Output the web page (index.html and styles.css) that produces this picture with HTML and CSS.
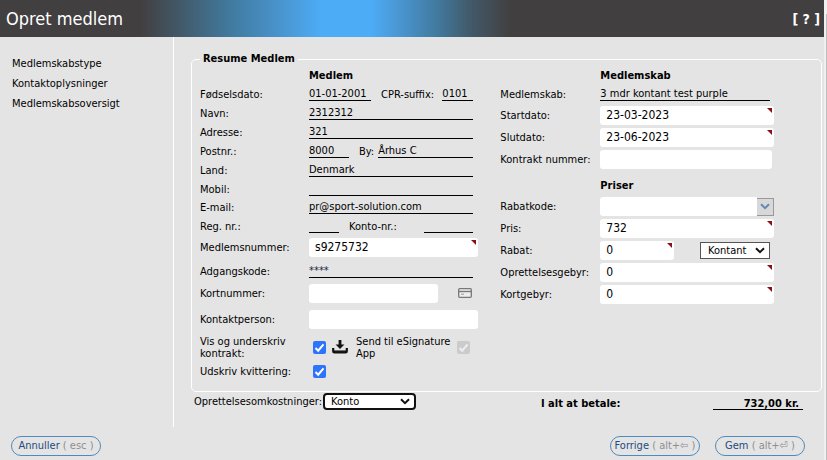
FILE: index.html
```html
<!DOCTYPE html>
<html lang="da">
<head>
<meta charset="utf-8">
<meta name="viewport" content="width=device-width, initial-scale=1">
<title>Opret medlem</title>
<link rel="stylesheet" href="styles.css">
</head>
<body>
<div class="window">
  <div class="page">
    <header class="titlebar">
      <h1 class="title">Opret medlem</h1>
      <a class="help" href="#help">[ ? ]</a>
    </header>
    <div class="content">
      <nav class="steps">
        <a href="#type">Medlemskabstype</a>
        <a href="#kontakt">Kontaktoplysninger</a>
        <a href="#oversigt">Medlemskabsoversigt</a>
      </nav>
      <main class="main">
        <fieldset class="resume">
          <legend>Resume Medlem</legend>
          <div class="columns">
            <section class="member">
              <h2 class="heading">Medlem</h2>
              <div class="row"><span class="label">Fødselsdato:</span><div class="values"><span class="value w-date">01-01-2001</span><span class="inner">CPR-suffix:</span><span class="value w-suffix">0101</span></div></div>
              <div class="row"><span class="label">Navn:</span><div class="values"><span class="value">2312312</span></div></div>
              <div class="row"><span class="label">Adresse:</span><div class="values"><span class="value">321</span></div></div>
              <div class="row"><span class="label">Postnr.:</span><div class="values"><span class="value w-zip">8000</span><span class="inner">By:</span><span class="value w-city">Århus C</span></div></div>
              <div class="row"><span class="label">Land:</span><div class="values"><span class="value">Denmark</span></div></div>
              <div class="row"><span class="label">Mobil:</span><div class="values"><span class="value"></span></div></div>
              <div class="row close"><span class="label">E-mail:</span><div class="values"><span class="value">pr@sport-solution.com</span></div></div>
              <div class="row close"><span class="label">Reg. nr.:</span><div class="values"><span class="value w-reg"></span><span class="inner">Konto-nr.:</span><span class="value w-account"></span></div></div>
              <div class="row tall close"><label class="label" for="number">Medlemsnummer:</label><span class="field required"><input id="number" type="text" value="s9275732"></span></div>
              <div class="row mid"><span class="label">Adgangskode:</span><div class="values"><span class="value stars">****</span></div></div>
              <div class="row tall close"><label class="label" for="card">Kortnummer:</label><div class="card"><input id="card" type="text">
                <svg width="14" height="10" viewBox="0 0 14 10" aria-hidden="true"><rect x="0.7" y="0.7" width="12.6" height="8.6" rx="1" fill="#ededed" stroke="#777" stroke-width="1.3"/><path d="M1 3.5h12" stroke="#777" stroke-width="1.4"/><path d="M3 6.2h3" stroke="#999"/></svg></div></div>
              <div class="row wide close"><label class="label" for="contact">Kontaktperson:</label><input id="contact" type="text"></div>
              <div class="row wide close"><label class="label" for="sign">Vis og underskriv kontrakt:</label>
                <div class="checks"><input id="sign" type="checkbox" checked>
                  <svg width="16" height="14" viewBox="0 0 16 14" aria-hidden="true"><path d="M6.6 0h2.8v4.4h3L8 9 3.6 4.4h3z" fill="#111"/><path d="M1.2 8v3.3q0 1.2 1.2 1.2h11.2q1.2 0 1.2-1.2V8" fill="none" stroke="#111" stroke-width="2.2"/><path d="M2 11.2h12" stroke="#111" stroke-width="1.5"/></svg>
                  <label class="label esign" for="esign">Send til eSignature App</label><input id="esign" type="checkbox" checked disabled></div></div>
              <div class="row short"><label class="label" for="receipt">Udskriv kvittering:</label><div class="checks"><input id="receipt" type="checkbox" checked></div></div>
            </section>
            <section class="membership">
              <h2 class="heading">Medlemskab</h2>
              <div class="row first"><span class="label">Medlemskab:</span><div class="values"><span class="value">3 mdr kontant test purple</span></div></div>
              <div class="row mid"><label class="label" for="start">Startdato:</label><span class="field required"><input id="start" type="text" value="23-03-2023"></span></div>
              <div class="row mid"><label class="label" for="end">Slutdato:</label><span class="field required"><input id="end" type="text" value="23-06-2023"></span></div>
              <div class="row mid"><label class="label" for="contract">Kontrakt nummer:</label><span class="field plain"><input id="contract" type="text"></span></div>
              <h2 class="heading prices">Priser</h2>
              <div class="row mid"><label class="label" for="code">Rabatkode:</label><div class="combo"><input id="code" type="text"><button type="button" aria-label="Vis rabatkoder"><svg width="10" height="7" viewBox="0 0 10 7"><path d="M1 1.2l4 4 4-4" fill="none" stroke="#6388b4" stroke-width="2"/></svg></button></div></div>
              <div class="row mid"><label class="label" for="price">Pris:</label><span class="field required"><input id="price" type="text" value="732"></span></div>
              <div class="row mid"><label class="label" for="discount">Rabat:</label><div class="discount"><span class="field required"><input id="discount" type="text" value="0"></span><select aria-label="Rabattype"><option>Kontant</option><option>Procent</option></select></div></div>
              <div class="row mid"><label class="label" for="fee">Oprettelsesgebyr:</label><span class="field required"><input id="fee" type="text" value="0"></span></div>
              <div class="row mid"><label class="label" for="cardfee">Kortgebyr:</label><span class="field required"><input id="cardfee" type="text" value="0"></span></div>
            </section>
          </div>
        </fieldset>
        <div class="summary">
          <label class="label" for="costs">Oprettelsesomkostninger:</label>
          <select id="costs" class="focused"><option>Konto</option><option>Kontant</option></select>
          <span class="total-label">I alt at betale:</span>
          <span class="total">732,00 kr.</span>
        </div>
      </main>
    </div>
    <footer class="actions">
      <button type="button">Annuller <span>( esc )</span></button>
      <button type="button" class="push">Forrige <span>( alt+⇦ )</span></button>
      <button type="button">Gem <span>( alt+⏎ )</span></button>
    </footer>
  </div>
  <div class="edge"></div>
</div>
</body>
</html>
```
FILE: styles.css
```css
* { box-sizing: border-box; }
body {
  margin: 0;
  background: #e4e4e4;
  color: #000;
  font: 11px/12px Tahoma, "DejaVu Sans Condensed", "DejaVu Sans", sans-serif;
}
a { color: inherit; text-decoration: none; }
h1, h2 { margin: 0; }
input, select, button { font: inherit; color: inherit; margin: 0; }
svg { display: block; flex: none; }

.window { display: flex; min-height: 100vh; }
.page { flex: 1; display: flex; flex-direction: column; min-width: 0; }
.edge {
  width: 3px;
  background: linear-gradient(#f0f0f0 14px, transparent 14px), linear-gradient(90deg, #f0f0f0 2px, #bdbdbd 2px);
}

.titlebar {
  display: flex;
  align-items: center;
  justify-content: space-between;
  height: 37px;
  padding: 0 4px 0 6px;
  color: #fff;
  background: linear-gradient(90deg, #423f40 17%, #425a6a 22%, #417a9f 28%, #4a99d6 35%, #4dacf6 39%, #4dacf6 45%, #4a99d6 48%, #417a9f 53%, #425a6a 57%, #423f40 62%);
}
.title { font-size: 18px; line-height: 24px; font-weight: normal; }
.help { font-size: 14px; line-height: 18px; font-weight: bold; }

.content { display: flex; min-height: 390px; }
.steps {
  display: flex;
  flex-direction: column;
  gap: 8px;
  width: 174px;
  padding: 21px 12px;
  border-right: 1px solid #fff;
}
.main { flex: 1; min-width: 0; padding: 15px 2px 0 17px; }

.resume {
  margin: 0;
  padding: 0 8px 11px;
  border: 1px solid #fff;
  border-radius: 5px;
  min-width: 0;
}
.resume legend { padding: 0 3px; line-height: 14px; font-weight: bold; }
.columns { display: grid; grid-template-columns: 49fr 51fr; }
.member { padding-right: 22px; --label: 109px; }
.membership { padding-right: 39px; --label: 100px; }
.heading { margin-left: var(--label); height: 18px; font-size: 11px; line-height: 20px; }
.prices { height: 25px; line-height: 31px; }

.row {
  display: grid;
  grid-template-columns: var(--label) minmax(0, 1fr);
  align-items: center;
  min-height: 19px;
}
.label { padding-top: 2px; }
.first { min-height: 20px; padding-bottom: 1px; }
.close { padding-bottom: 2px; }
.mid { min-height: 22px; }
.tall { min-height: 24px; }
.wide { min-height: 28px; }
.short { min-height: 18px; }

.values { display: flex; align-items: center; padding-right: 5px; }
.membership .values { padding-right: 4px; }
.value { flex: 1; height: 14px; border-bottom: 1px solid #000; line-height: 14px; white-space: nowrap; }
.inner { padding-top: 2px; white-space: nowrap; }
.w-date { flex: none; width: 62px; margin-right: 10px; }
.w-suffix { flex: none; width: 31px; margin-left: auto; }
.w-zip { flex: none; width: 40px; margin-right: 10px; }
.w-city { margin-left: 4px; }
.w-reg { flex: none; width: 30px; margin-right: 10px; }
.w-account { flex: none; width: 49px; margin-left: auto; }
.stars { color: #224; }

input[type="text"] {
  display: block;
  width: 100%;
  height: 19px;
  padding: 0 6px;
  border: 0;
  border-radius: 3px;
  background: #fff;
  font-size: 12px;
}
.field { position: relative; display: block; }
.plain { padding-right: 2px; }
.required::after {
  content: "";
  position: absolute;
  top: 2px;
  right: 2px;
  border-top: 5px solid #8b1016;
  border-left: 5px solid transparent;
}
.card { display: flex; align-items: center; justify-content: space-between; padding-right: 6px; }
.card input[type="text"] { width: 129px; }

.checks { display: flex; align-items: center; padding-left: 4px; }
.checks svg { margin-left: 6px; }
.esign { width: 101px; margin-left: 8px; }
input[type="checkbox"] {
  appearance: none;
  flex: none;
  width: 13px;
  height: 13px;
  border-radius: 2px;
  background: #2b74fb url("data:image/svg+xml,%3Csvg xmlns='http://www.w3.org/2000/svg' viewBox='0 0 13 13'%3E%3Cpath d='M2.5 7l2.7 2.7L10.5 3.3' fill='none' stroke='white' stroke-width='2'/%3E%3C/svg%3E");
}
input[type="checkbox"]:disabled {
  background: #cbcbcb url("data:image/svg+xml,%3Csvg xmlns='http://www.w3.org/2000/svg' viewBox='0 0 13 13'%3E%3Cpath d='M2.5 7l2.7 2.7L10.5 3.3' fill='none' stroke='%23eee' stroke-width='2'/%3E%3C/svg%3E");
}

.combo { display: flex; }
.combo input[type="text"] { flex: 1; min-width: 0; border-radius: 3px 0 0 3px; }
.combo button {
  display: flex;
  align-items: center;
  justify-content: center;
  width: 17px;
  height: 18px;
  margin-top: 1px;
  padding: 0;
  border: 1px solid #999;
  border-left: 0;
  background: #d8d8d8;
}
.discount { display: flex; align-items: center; justify-content: space-between; padding-right: 4px; }
.discount .field { width: 74px; }

select {
  appearance: none;
  width: 70px;
  height: 17px;
  padding: 1px 7px 0;
  border: 1px solid #555;
  border-radius: 0;
  background: #fff url("data:image/svg+xml,%3Csvg xmlns='http://www.w3.org/2000/svg' width='10' height='7' viewBox='0 0 10 7'%3E%3Cpath d='M1 1.2l4 4 4-4' fill='none' stroke='%23111' stroke-width='2'/%3E%3C/svg%3E") no-repeat right 4px center;
}
.focused { width: 93px; padding-left: 6px; border: 2px solid #111; border-radius: 4px; outline: 0; }

.summary { display: flex; align-items: center; padding: 0 19px 0 3px; }
.summary label { width: 129px; white-space: nowrap; }
.total-label { margin-left: 125px; padding-top: 6px; font-weight: bold; }
.total {
  width: 90px;
  height: 18px;
  margin-left: auto;
  padding-right: 4px;
  border-bottom: 1px solid #000;
  font-weight: bold;
  line-height: 23px;
  text-align: right;
}

.actions { display: flex; gap: 15px; padding: 9px 19px 4px 11px; }
.actions button {
  width: 90px;
  height: 20px;
  padding: 0;
  border: 1px solid #4e8abd;
  border-radius: 10px;
  background: transparent;
  color: #234a80;
  white-space: nowrap;
}
.actions span { color: #8f8f8f; }
.push { margin-left: auto; }
```
